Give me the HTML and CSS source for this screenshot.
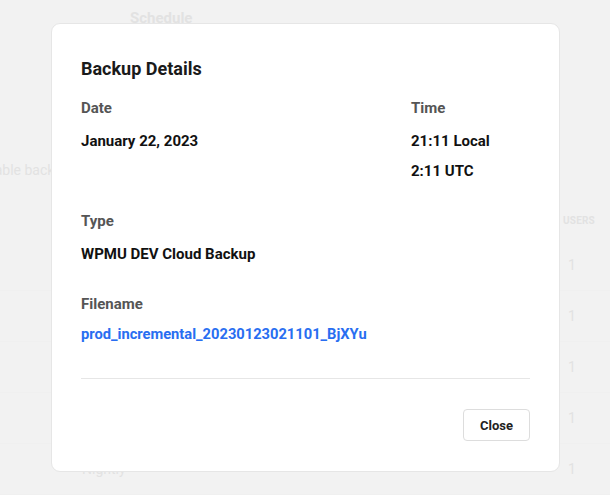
FILE: index.html
```html
<!DOCTYPE html>
<html lang="en">
<head>
<meta charset="utf-8">
<title>Backup Details</title>
<link rel="stylesheet" href="styles.css">
</head>
<body>
<div class="page">
  <div class="page-head">
    <h2 class="page-title">Schedule</h2>
  </div>
  <div class="page-note">Enable backups to run on a schedule</div>
  <div class="table">
    <div class="table-head"><span class="col-users">Users</span></div>
    <div class="table-row"><span class="col-users">1</span></div>
    <div class="table-row"><span class="col-users">1</span></div>
    <div class="table-row"><span class="col-users">1</span></div>
    <div class="table-row"><span class="col-users">1</span></div>
    <div class="table-row"><span class="col-name">Nightly</span><span class="col-users">1</span></div>
  </div>
</div>

<div class="modal" role="dialog" aria-labelledby="modal-title">
  <h1 class="modal-title" id="modal-title">Backup Details</h1>
  <div class="details">
    <div class="field">
      <div class="label">Date</div>
      <div class="value">January 22, 2023</div>
    </div>
    <div class="field field-time">
      <div class="label">Time</div>
      <div class="value">21:11 Local</div>
      <div class="value">2:11 UTC</div>
    </div>
    <div class="field field-wide">
      <div class="label">Type</div>
      <div class="value">WPMU DEV Cloud Backup</div>
    </div>
    <div class="field field-wide">
      <div class="label">Filename</div>
      <a class="value link" href="#">prod_incremental_20230123021101_BjXYu</a>
    </div>
  </div>
  <div class="modal-footer">
    <button class="btn" type="button">Close</button>
  </div>
</div>
</body>
</html>
```

FILE: styles.css
```css
* { box-sizing: border-box; }

html, body {
  margin: 0;
  padding: 0;
  height: 100%;
}

body {
  background: #f2f2f2;
  font-family: Roboto, "Liberation Sans", Arial, sans-serif;
  overflow: hidden;
  position: relative;
}

/* faded page behind the dialog */
.page {
  color: #e2e2e2;
  padding: 8px 0 0 0;
}

.page-head {
  padding-left: 130px;
}

.page-title {
  margin: 0;
  font-size: 15px;
  line-height: 20px;
  font-weight: 700;
}

.page-note {
  margin: 131px 0 0 -21px;
  font-size: 14px;
  line-height: 22px;
}

.table {
  margin-top: 29px;
}

.table-head {
  display: flex;
  justify-content: flex-end;
  height: 20px;
  align-items: center;
  font-size: 10px;
  font-weight: 700;
  text-transform: uppercase;
  letter-spacing: 0.2px;
}

.table-head .col-users {
  width: 47px;
}

.table-row {
  display: flex;
  align-items: center;
  justify-content: space-between;
  height: 51px;
  font-size: 14px;
  border-bottom: 1px solid #f0f0f0;
}

.table-head + .table-row { margin-top: 10px; }

.table-row .col-users {
  margin-left: auto;
  width: 42px;
}

.col-name {
  padding-left: 82px;
}

/* dialog */
.modal {
  position: absolute;
  left: 51px;
  top: 23px;
  width: 509px;
  background: #fff;
  border: 1px solid #e6e6e6;
  border-radius: 9px;
  padding: 30px 29px 30px 29px;
}

.modal-title {
  margin: 0;
  font-size: 18px;
  line-height: 30px;
  font-weight: 700;
  color: #1a1a1a;
}

.details {
  display: grid;
  grid-template-columns: 1fr 119px;
  row-gap: 25px;
  margin-top: 14px;
}

.field-wide {
  grid-column: 1 / -1;
}

.label {
  font-size: 15px;
  line-height: 20px;
  font-weight: 700;
  color: #555;
  margin-bottom: 8px;
}

.value {
  display: block;
  font-size: 15px;
  line-height: 30px;
  font-weight: 700;
  color: #111;
}

.link {
  font-size: 14.7px;
  color: #286ef1;
  text-decoration: none;
  margin-top: -3px;
}

.modal-footer {
  display: flex;
  justify-content: flex-end;
  margin-top: 29px;
  padding-top: 30px;
  border-top: 1px solid #e6e6e6;
}

.btn {
  height: 32px;
  padding: 0 16px;
  border: 1px solid #ddd;
  border-radius: 4px;
  background: #fff;
  font-family: Roboto, "Liberation Sans", Arial, sans-serif;
  font-size: 13px;
  font-weight: 700;
  color: #222;
  cursor: pointer;
}
```
